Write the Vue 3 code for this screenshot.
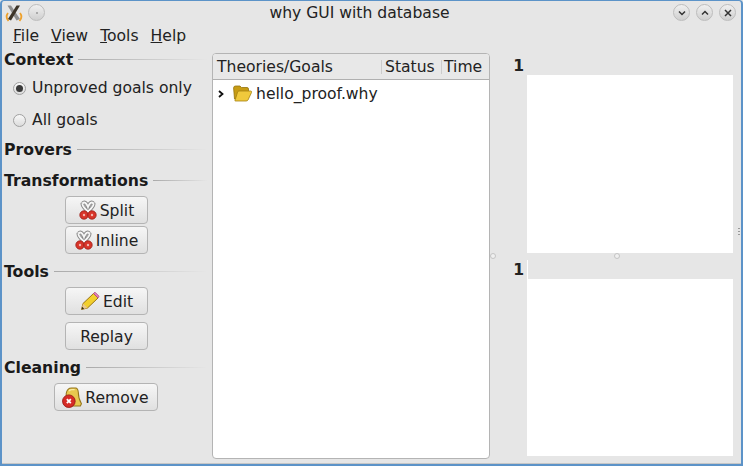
<template>
  <div class="window">
    <div class="titlebar">
      <svg class="app-icon" width="18" height="18" viewBox="0 0 18 18">
        <path d="M3 9 Q0 13 3.5 17 M15 9 Q18 13 14.5 17" fill="none" stroke="#eea12c" stroke-width="1.8" />
        <path d="M2.5 1.5 L6 1.5 L15 15 L11.5 16.5 Z" fill="#8f8f8f" />
        <path d="M15 1.5 L11.5 1.5 L3 15 L6 16.5 Z" fill="#3c3428" />
      </svg>
      <span class="wm-btn pin"><i class="pin-dot"></i></span>
      <span class="title">why GUI with database</span>
      <span class="wm-btn">
        <svg width="10" height="10" viewBox="0 0 10 10"><path :d="chevronDown" class="wm-glyph" /></svg>
      </span>
      <span class="wm-btn">
        <svg width="10" height="10" viewBox="0 0 10 10"><path :d="chevronUp" class="wm-glyph" /></svg>
      </span>
      <span class="wm-btn">
        <svg width="10" height="10" viewBox="0 0 10 10"><path d="M2 2 L8 8 M8 2 L2 8" class="wm-glyph" /></svg>
      </span>
    </div>

    <div class="menubar">
      <span v-for="m in menus" :key="m.rest" class="menu-item"><u>{{ m.key }}</u>{{ m.rest }}</span>
    </div>

    <div class="main">
      <div class="side">
        <div class="group-title context"><b>Context</b><i class="rule"></i></div>
        <label v-for="(r, i) in radios" :key="r" class="radio-row">
          <span class="radio" :class="{ on: i === 0 }"></span>{{ r }}
        </label>

        <div class="group-title provers"><b>Provers</b><i class="rule"></i></div>

        <div class="group-title transf"><b>Transformations</b><i class="rule"></i></div>
        <div class="buttons tight">
          <button class="btn">
            <svg width="18" height="20" viewBox="0 0 18 20"><use href="#scissors" /></svg>Split
          </button>
          <button class="btn">
            <svg width="18" height="20" viewBox="0 0 18 20"><use href="#scissors" /></svg>Inline
          </button>
        </div>

        <div class="group-title tools"><b>Tools</b><i class="rule"></i></div>
        <div class="buttons loose">
          <button class="btn">
            <svg width="20" height="20" viewBox="0 0 20 20">
              <path d="M1.5 18.5 L3 12.5 L13.5 2.5 L18 7 L7.5 17 Z" fill="#f2cf2c" stroke="#9a7414" stroke-width="1" />
              <path d="M13.5 2.5 L15 1.2 L19 5.2 L18 7 Z" fill="#e77fb8" stroke="#a8487c" stroke-width=".8" />
              <path d="M1.5 18.5 L3 12.5 L7.5 17 Z" fill="#e9c890" />
              <path d="M1.5 18.5 L2.2 15.8 L4.2 17.8 Z" fill="#3a2c16" />
            </svg>Edit
          </button>
          <button class="btn">Replay</button>
        </div>

        <div class="group-title cleaning"><b>Cleaning</b><i class="rule"></i></div>
        <div class="buttons">
          <button class="btn wide">
            <svg width="20" height="21" viewBox="0 0 19 20">
              <path d="M4 6 Q5 1 9 1 L13 1 Q15 1 15.5 5 Q15.5 11 18.5 16 L17.5 18 L8 18 L4 12 Z" fill="#e8c84e" stroke="#93741c" stroke-width="1" />
              <path d="M7 4 Q7 2.5 9.5 2.5 L12 2.5" fill="none" stroke="#f8eca6" stroke-width="1.4" />
              <circle cx="6.5" cy="13.5" r="6" fill="#d62b26" stroke="#941613" stroke-width=".8" />
              <path d="M4.6 11.6 L8.4 15.4 M8.4 11.6 L4.6 15.4" stroke="#fff" stroke-width="1.7" />
            </svg>Remove
          </button>
        </div>
      </div>

      <div class="tree">
        <div class="tree-head">
          <span class="col col-name">Theories/Goals</span>
          <span class="col col-status">Status</span>
          <span class="col col-time">Time</span>
        </div>
        <div class="tree-row">
          <svg class="expander" width="6" height="8" viewBox="0 0 6 8"><path d="M1 1 L4.5 4 L1 7" fill="none" stroke="#111" stroke-width="1.8" /></svg>
          <svg width="19" height="17" viewBox="0 0 19 17">
            <path d="M1.5 14 L.6 3 Q.6 1 2.5 1 L7 1 L8.5 2.5 L14 2.5 Q15.5 2.5 15.5 4 L15.5 7 Z" fill="#c79c14" stroke="#94730e" stroke-width=".8" />
            <path d="M2 15.5 Q1.5 16 2.5 16 L13 16 Q14.5 16 15 15 L18.5 7.5 Q19 6 17.5 6 L6 6 Q5 6 4.6 7 Z" fill="#f0c93c" stroke="#a5810f" stroke-width=".8" />
          </svg>
          <span class="file">hello_proof.why</span>
        </div>
      </div>

      <div class="editors">
        <div class="editor top">
          <div class="gutter"><span class="lineno">1</span></div>
          <div class="pane"><div class="band"></div><div class="page"></div></div>
        </div>
        <div class="editor bottom">
          <div class="gutter"><span class="lineno">1</span></div>
          <div class="pane"><div class="band"><i class="sliver"></i></div><div class="page"></div></div>
        </div>
        <i class="handle h-left"></i>
        <i class="handle h-mid"></i>
      </div>
    </div>

    <i class="grip"></i>

    <svg width="0" height="0" class="defs">
      <symbol id="scissors" viewBox="0 0 18 20">
        <path d="M3.5 3.5 Q2.5 6 10.5 13 M14.5 3.5 Q15.5 6 7.5 13 M3.5 3.5 Q6.5 .5 9 7 Q11.5 .5 14.5 3.5" stroke="#868686" stroke-width="3.8" fill="none" />
        <path d="M3.5 3.5 Q2.5 6 10.5 13 M14.5 3.5 Q15.5 6 7.5 13 M3.5 3.5 Q6.5 .5 9 7 Q11.5 .5 14.5 3.5" stroke="#f6f6f6" stroke-width="1.9" fill="none" />
        <circle cx="5" cy="15" r="4.2" fill="#d8352a" stroke="#9c1f18" stroke-width=".8" />
        <circle cx="13" cy="15" r="4.2" fill="#d8352a" stroke="#9c1f18" stroke-width=".8" />
        <circle cx="5" cy="15" r="1.2" fill="#f2b8b0" />
        <circle cx="13" cy="15" r="1.2" fill="#f2b8b0" />
      </symbol>
    </svg>
  </div>
</template>

<script setup>
const menus = [
  { key: 'F', rest: 'ile' },
  { key: 'V', rest: 'iew' },
  { key: 'T', rest: 'ools' },
  { key: 'H', rest: 'elp' }
]
const radios = ['Unproved goals only', 'All goals']
const chevronDown = 'M2 3.5 L5 6.5 L8 3.5'
const chevronUp = 'M2 6.5 L5 3.5 L8 6.5'
</script>

<style>
html, body {
  margin: 0;
  background: #e6e6e6;
}
</style>

<style scoped>
.window {
  position: relative;
  box-sizing: border-box;
  width: 743px;
  height: 466px;
  overflow: hidden;
  background: #e6e6e6;
  border: 1px solid #5c93c8;
  border-left-width: 2px;
  border-right-width: 2px;
  border-bottom-width: 2px;
  border-radius: 4px 4px 0 0;
  box-shadow: inset 0 -1px 0 #c6c6c6;
  font-family: "DejaVu Sans", sans-serif;
  font-size: 15.6px;
  color: #222;
}
.defs {
  position: absolute;
}
.titlebar {
  display: flex;
  align-items: center;
  height: 23px;
  padding: 0 5px 0 3px;
  gap: 6px;
}
.app-icon {
  flex: none;
}
.title {
  flex: 1;
  text-align: center;
  font-size: 15.6px;
  margin-left: 37px;
  margin-right: 36px;
}
.wm-btn {
  flex: none;
  display: flex;
  align-items: center;
  justify-content: center;
  width: 15px;
  height: 15px;
  border-radius: 50%;
  background: linear-gradient(#f0f0f0, #cfcfcf);
  border: 1px solid #bcbcbc;
}
.pin {
  margin-left: -1px;
}
.pin-dot {
  width: 2px;
  height: 2px;
  background: #999;
  border-radius: 50%;
}
.wm-glyph {
  fill: none;
  stroke: #333;
  stroke-width: 1.5;
}
.menubar {
  display: flex;
  height: 24px;
  align-items: center;
  padding-left: 11px;
  gap: 12px;
}
.main {
  display: flex;
  height: 412px;
}
.side {
  flex: none;
  width: 210px;
  box-sizing: border-box;
  padding-left: 2px;
  display: flex;
  flex-direction: column;
}
.group-title {
  display: flex;
  align-items: center;
  gap: 5px;
  height: 18px;
  padding-right: 4px;
}
.group-title b {
  font-size: 15.7px;
  font-weight: 700;
  color: #1a1a1a;
}
.rule {
  flex: 1;
  height: 1px;
  background: linear-gradient(to right, #aaa, #e6e6e6);
}
.context { margin-top: 2px; }
.provers { margin-top: 4px; }
.transf { margin-top: 13px; }
.tools { margin-top: 8px; }
.cleaning { margin-top: 8px; }
.radio-row {
  display: flex;
  align-items: center;
  height: 32px;
  padding-left: 9px;
  gap: 6px;
}
.radio-row:first-of-type {
  margin-top: 4px;
}
.radio {
  box-sizing: border-box;
  width: 13px;
  height: 13px;
  border-radius: 50%;
  border: 1px solid #a0a0a0;
  background: linear-gradient(#f8f8f8, #dcdcdc);
  display: flex;
  align-items: center;
  justify-content: center;
}
.radio.on::after {
  content: "";
  width: 7px;
  height: 7px;
  border-radius: 50%;
  background: #3a3a3a;
}
.buttons {
  display: flex;
  flex-direction: column;
  align-items: center;
  margin-top: 7px;
  margin-right: 3px;
}
.tight { gap: 2px; }
.loose { gap: 7px; }
.btn {
  display: flex;
  align-items: center;
  justify-content: center;
  gap: 3px;
  box-sizing: border-box;
  height: 28px;
  width: 83px;
  padding: 2px 0 0;
  font: inherit;
  color: inherit;
  background: linear-gradient(#f6f6f6, #e0e0e0);
  border: 1px solid #b4b4b4;
  border-radius: 4px;
}
.btn.wide {
  width: 104px;
  margin-right: 2px;
}
.btn svg {
  flex: none;
  margin-top: -2px;
}
.tree {
  flex: none;
  box-sizing: border-box;
  width: 278px;
  height: 406px;
  margin-top: 5px;
  background: #fff;
  border: 1px solid #b4b4b4;
  border-radius: 4px;
}
.tree-head {
  display: flex;
  align-items: center;
  height: 25px;
  background: #e8e8e8;
  border-bottom: 1px solid #b0b0b0;
  border-radius: 3px 3px 0 0;
}
.col {
  box-sizing: border-box;
  padding-left: 3px;
  line-height: 14px;
}
.col-name {
  width: 168px;
  padding-left: 4px;
}
.col-status {
  width: 60px;
  border-left: 1px solid #ccc;
}
.col-time {
  flex: 1;
  padding-left: 2px;
  border-left: 1px solid #ccc;
}
.tree-row {
  display: flex;
  align-items: center;
  height: 27px;
  padding-left: 5px;
}
.expander {
  margin-right: 9px;
}
.file {
  margin-left: 4px;
}
.editors {
  position: relative;
  flex: 1;
  display: flex;
  flex-direction: column;
  margin-top: 5px;
  padding-right: 8px;
  height: 403px;
}
.editor {
  display: flex;
  flex: none;
}
.editor.top { height: 200px; }
.editor.bottom { height: 203px; }
.gutter {
  flex: none;
  width: 37px;
  text-align: right;
  box-sizing: border-box;
  padding-right: 3px;
}
.lineno {
  display: block;
  font-weight: 700;
  font-size: 15.6px;
  line-height: 18px;
  margin-top: 4px;
}
.bottom .lineno {
  margin-top: 8px;
}
.pane {
  flex: 1;
  display: flex;
  flex-direction: column;
}
.band {
  position: relative;
  flex: none;
  height: 26px;
}
.top .band { height: 22px; }
.sliver {
  position: absolute;
  left: 0;
  bottom: 0;
  width: 1px;
  height: 19px;
  background: #fff;
}
.page {
  flex: 1;
  background: #fff;
}
.handle {
  position: absolute;
  width: 4px;
  height: 4px;
  border: 1px solid #c4c4c4;
  border-radius: 50%;
  background: #f0f0f0;
}
.h-left { left: 0; top: 200px; }
.h-mid { left: 124px; top: 200px; }
.grip {
  position: absolute;
  right: 1px;
  top: 227px;
  width: 2px;
  height: 9px;
  background: repeating-linear-gradient(#999 0 1px, transparent 1px 3px);
}
</style>
